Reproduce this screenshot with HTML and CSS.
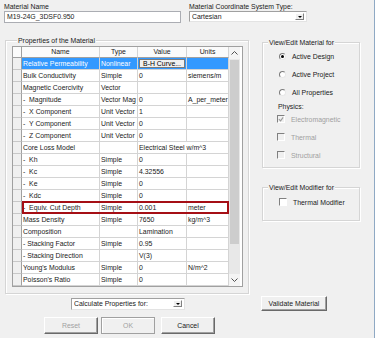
FILE: index.html
```html
<!DOCTYPE html>
<html lang="en">

<head>
    <meta charset="UTF-8">
    <meta name="viewport" content="width=device-width, initial-scale=1.0">
    <title>Material Properties</title>
    <link rel="stylesheet" href="styles.css">
</head>

<body>
    <div class="dialog">
        <div class="top">
            <div class="field name-field">
                <div class="label">Material Name</div>
                <div class="textbox">M19-24G_3DSF0.950</div>
            </div>
            <div class="field coord-field">
                <div class="label">Material Coordinate System Type:</div>
                <div class="combo coord-combo"><span class="combo-text">Cartesian</span><span class="drop"></span></div>
            </div>
        </div>

        <div class="main">
            <div class="group props">
                <div class="group-title">Properties of the Material</div>
                <div class="grid-wrap">
                    <div class="grid">
                        <div class="row head">
                            <div class="c rh"></div>
                            <div class="c">Name</div>
                            <div class="c">Type</div>
                            <div class="c">Value</div>
                            <div class="c">Units</div>
                        </div>
                        <div class="row sel">
                            <div class="c rh"></div>
                            <div class="c">Relative Permeability</div>
                            <div class="c">Nonlinear</div>
                            <div class="c"><span class="cell-btn">B-H Curve...</span></div>
                            <div class="c"></div>
                        </div>
                        <div class="row">
                            <div class="c rh"></div>
                            <div class="c">Bulk Conductivity</div>
                            <div class="c">Simple</div>
                            <div class="c">0</div>
                            <div class="c">siemens/m</div>
                        </div>
                        <div class="row">
                            <div class="c rh"></div>
                            <div class="c">Magnetic Coercivity</div>
                            <div class="c">Vector</div>
                            <div class="c"></div>
                            <div class="c"></div>
                        </div>
                        <div class="row">
                            <div class="c rh"></div>
                            <div class="c">-&nbsp; Magnitude</div>
                            <div class="c">Vector Mag</div>
                            <div class="c">0</div>
                            <div class="c">A_per_meter</div>
                        </div>
                        <div class="row">
                            <div class="c rh"></div>
                            <div class="c">-&nbsp; X Component</div>
                            <div class="c">Unit Vector</div>
                            <div class="c">1</div>
                            <div class="c"></div>
                        </div>
                        <div class="row">
                            <div class="c rh"></div>
                            <div class="c">-&nbsp; Y Component</div>
                            <div class="c">Unit Vector</div>
                            <div class="c">0</div>
                            <div class="c"></div>
                        </div>
                        <div class="row">
                            <div class="c rh"></div>
                            <div class="c">-&nbsp; Z Component</div>
                            <div class="c">Unit Vector</div>
                            <div class="c">0</div>
                            <div class="c"></div>
                        </div>
                        <div class="row">
                            <div class="c rh"></div>
                            <div class="c">Core Loss Model</div>
                            <div class="c"></div>
                            <div class="c span2">Electrical Steel w/m^3</div>
                        </div>
                        <div class="row">
                            <div class="c rh"></div>
                            <div class="c">-&nbsp; Kh</div>
                            <div class="c">Simple</div>
                            <div class="c">0</div>
                            <div class="c"></div>
                        </div>
                        <div class="row">
                            <div class="c rh"></div>
                            <div class="c">-&nbsp; Kc</div>
                            <div class="c">Simple</div>
                            <div class="c">4.32556</div>
                            <div class="c"></div>
                        </div>
                        <div class="row">
                            <div class="c rh"></div>
                            <div class="c">-&nbsp; Ke</div>
                            <div class="c">Simple</div>
                            <div class="c">0</div>
                            <div class="c"></div>
                        </div>
                        <div class="row">
                            <div class="c rh"></div>
                            <div class="c">-&nbsp; Kdc</div>
                            <div class="c">Simple</div>
                            <div class="c">0</div>
                            <div class="c"></div>
                        </div>
                        <div class="row mark">
                            <div class="c rh"></div>
                            <div class="c">-&nbsp; Equiv. Cut Depth</div>
                            <div class="c">Simple</div>
                            <div class="c">0.001</div>
                            <div class="c">meter</div>
                        </div>
                        <div class="row">
                            <div class="c rh"></div>
                            <div class="c">Mass Density</div>
                            <div class="c">Simple</div>
                            <div class="c">7650</div>
                            <div class="c">kg/m^3</div>
                        </div>
                        <div class="row">
                            <div class="c rh"></div>
                            <div class="c">Composition</div>
                            <div class="c"></div>
                            <div class="c">Lamination</div>
                            <div class="c"></div>
                        </div>
                        <div class="row">
                            <div class="c rh"></div>
                            <div class="c">- Stacking Factor</div>
                            <div class="c">Simple</div>
                            <div class="c">0.95</div>
                            <div class="c"></div>
                        </div>
                        <div class="row">
                            <div class="c rh"></div>
                            <div class="c">- Stacking Direction</div>
                            <div class="c"></div>
                            <div class="c">V(3)</div>
                            <div class="c"></div>
                        </div>
                        <div class="row">
                            <div class="c rh"></div>
                            <div class="c">Young's Modulus</div>
                            <div class="c">Simple</div>
                            <div class="c">0</div>
                            <div class="c">N/m^2</div>
                        </div>
                        <div class="row">
                            <div class="c rh"></div>
                            <div class="c">Poisson's Ratio</div>
                            <div class="c">Simple</div>
                            <div class="c">0</div>
                            <div class="c"></div>
                        </div>
                    </div>
                    <div class="scrollbar">
                        <div class="sb-arrow">
                            <svg width="7" height="4" viewBox="0 0 7 4"><path d="M0.5 3.5 L3.5 0.5 L6.5 3.5" fill="none" stroke="#505050" stroke-width="1"/></svg>
                        </div>
                        <div class="sb-track"><div class="sb-thumb"></div></div>
                        <div class="sb-arrow">
                            <svg width="7" height="4" viewBox="0 0 7 4"><path d="M0.5 0.5 L3.5 3.5 L6.5 0.5" fill="none" stroke="#505050" stroke-width="1"/></svg>
                        </div>
                    </div>
                </div>
            </div>

            <div class="side">
                <div class="group view">
                    <div class="group-title">View/Edit Material for</div>
                    <div class="opt first"><span class="radio on"></span>Active Design</div>
                    <div class="opt"><span class="radio"></span>Active Project</div>
                    <div class="opt"><span class="radio"></span>All Properties</div>
                    <div class="physics">Physics:</div>
                    <div class="chk-row off em"><span class="check checked"><svg width="7" height="7" viewBox="0 0 7 7"><path d="M1 3 L3 5 L6 1" fill="none" stroke="#9a9a9a" stroke-width="1.3"/></svg></span>Electromagnetic</div>
                    <div class="chk-row off"><span class="check"></span>Thermal</div>
                    <div class="chk-row off"><span class="check"></span>Structural</div>
                </div>
                <div class="group modifier">
                    <div class="group-title">View/Edit Modifier for</div>
                    <div class="chk-row mod"><span class="check live"></span>Thermal Modifier</div>
                </div>
            </div>
        </div>

        <div class="calc-row">
            <div class="combo calc-combo"><span class="combo-text">Calculate Properties for:</span><span class="drop"></span></div>
            <div class="btn validate">Validate Material</div>
        </div>
        <div class="btn-row">
            <div class="btn off reset">Reset</div>
            <div class="btn off ok">OK</div>
            <div class="btn cancel">Cancel</div>
        </div>
    </div>
</body>

</html>
```

FILE: styles.css
```css
body {
    margin: 0;
    background-color: #ffffff;
    font-family: "Liberation Sans", Arial, sans-serif;
    font-size: 6.9px;
    color: #1a1a1a;
}

.dialog {
    width: 375px;
    height: 338px;
    box-sizing: border-box;
    background-color: #f0f0f0;
    border-right: 1px solid #8fa9c4;
    overflow: hidden;
}

/* top fields */
.top {
    display: flex;
    padding-top: 2px;
}

.label {
    line-height: 9px;
    height: 9px;
    white-space: nowrap;
}

.name-field {
    margin-left: 4px;
    width: 177px;
}

.coord-field {
    margin-left: 8px;
}

.textbox {
    height: 12px;
    box-sizing: border-box;
    background-color: #ffffff;
    border: 1px solid #abadb3;
    line-height: 10px;
    padding-left: 2px;
}

.combo {
    display: flex;
    align-items: center;
    box-sizing: border-box;
    background-color: #ffffff;
    border: 1px solid;
    border-color: #a0a0a0 #e3e3e3 #e3e3e3 #a0a0a0;
    padding-left: 2px;
}

.coord-combo {
    width: 118px;
    height: 11px;
}

.combo-text {
    flex: 1;
    white-space: nowrap;
    overflow: hidden;
}

.drop {
    width: 9px;
    height: 7px;
    margin-right: 2px;
    box-sizing: border-box;
    background-color: #f0f0f0;
    border: 1px solid;
    border-color: #ffffff #808080 #808080 #ffffff;
    display: flex;
    align-items: center;
    justify-content: center;
}

.drop::after {
    content: "";
    border-left: 2px solid transparent;
    border-right: 2px solid transparent;
    border-top: 2px solid #000000;
}

/* group boxes */
.main {
    display: flex;
    align-items: flex-start;
    margin-top: 17px;
}

.group {
    box-sizing: border-box;
    border: 1px solid #d5d5d5;
    box-shadow: 1px 1px 0 #ffffff, inset 1px 1px 0 #ffffff;
}

.group-title {
    width: max-content;
    margin: -5px 0 0 5px;
    padding: 0 1px;
    line-height: 9px;
    background-color: #f0f0f0;
}

.props {
    margin-left: 5px;
    width: 244px;
    height: 254px;
    padding-left: 6px;
}

.grid-wrap {
    display: flex;
    width: 229px;
    margin-top: 1px;
    border: 1px solid #a0a0a0;
    background-color: #ffffff;
}

.grid {
    width: 216px;
}

.row {
    display: grid;
    grid-template-columns: 9px 78px 38px 49px 42px;
    height: 12px;
}

.c {
    box-sizing: border-box;
    height: 12px;
    border-right: 1px solid #d4d4d4;
    border-bottom: 1px solid #d4d4d4;
    padding-left: 1px;
    line-height: 11px;
    white-space: nowrap;
    overflow: hidden;
}

.c.span2 {
    grid-column: span 2;
}

.c.rh {
    background-color: #f0f0f0;
    border-right-color: #a0a0a0;
    border-bottom-color: #c8c8c8;
}

.row.head {
    height: 11px;
}

.row.head .c {
    height: 11px;
    line-height: 10px;
    text-align: center;
    padding-left: 0;
    border-bottom-color: #a0a0a0;
    background-color: #fbfbfb;
}

.row.sel .c:not(.rh) {
    background-color: #3399ff;
    color: #ffffff;
}

.cell-btn {
    display: block;
    margin: 1px 1px 0 0;
    height: 9px;
    line-height: 8px;
    box-sizing: border-box;
    background-color: #f0f0f0;
    color: #000000;
    border: 1px solid #7a7a7a;
    text-align: center;
}

.row.mark {
    position: relative;
}

.row.mark::after {
    content: "";
    position: absolute;
    left: 9px;
    right: 0;
    top: -1px;
    bottom: 0;
    border: 2px solid #a50f15;
}

/* scrollbar */
.scrollbar {
    width: 11px;
    display: flex;
    flex-direction: column;
    background-color: #e8e8e8;
}

.sb-arrow {
    height: 12px;
    display: flex;
    align-items: center;
    justify-content: center;
    background-color: #f4f4f4;
}

.sb-track {
    flex: 1;
}

.sb-thumb {
    height: 184px;
    margin: 1px 1px 0 1px;
    background-color: #cdcdcd;
}

/* right side */
.side {
    margin-left: 13px;
    width: 98px;
}

.view {
    margin-top: 2px;
    height: 126px;
}

.opt {
    display: flex;
    align-items: center;
    height: 12px;
    margin-top: 6px;
    padding-left: 16px;
}

.opt.first {
    margin-top: 3px;
}

.radio {
    width: 7px;
    height: 7px;
    box-sizing: border-box;
    border-radius: 50%;
    border: 1px solid;
    border-color: #7a7a7a #e8e8e8 #e8e8e8 #7a7a7a;
    background-color: #ffffff;
    margin-right: 6px;
    display: flex;
    align-items: center;
    justify-content: center;
}

.radio.on::after {
    content: "";
    width: 3px;
    height: 3px;
    border-radius: 50%;
    background-color: #000000;
}

.physics {
    height: 12px;
    line-height: 12px;
    margin-top: 3px;
    padding-left: 15px;
}

.chk-row {
    display: flex;
    align-items: center;
    height: 12px;
    margin-top: 6px;
    padding-left: 14px;
}

.chk-row.em {
    margin-top: 0;
}

.chk-row.off {
    color: #a0a0a0;
}

.check {
    width: 8px;
    height: 8px;
    box-sizing: border-box;
    border: 1px solid;
    border-color: #808080 #ffffff #ffffff #808080;
    background-color: #f0f0f0;
    margin-right: 6px;
    display: flex;
    align-items: center;
    justify-content: center;
}

.check.live {
    background-color: #ffffff;
}

.modifier {
    margin-top: 19px;
    height: 34px;
}

.chk-row.mod {
    margin-top: 4px;
    padding-left: 16px;
}

/* bottom buttons */
.calc-row {
    display: flex;
    align-items: center;
    height: 15px;
    margin-top: 2px;
}

.calc-combo {
    margin-left: 71px;
    width: 114px;
    height: 12px;
}

.btn {
    box-sizing: border-box;
    display: flex;
    align-items: center;
    justify-content: center;
    background-color: #f0f0f0;
    border: 1px solid;
    border-color: #ffffff #696969 #696969 #ffffff;
    box-shadow: inset -1px -1px 0 #a0a0a0;
    white-space: nowrap;
}

.btn.off {
    color: #a0a0a0;
}

.validate {
    margin-left: 76px;
    width: 66px;
    height: 15px;
}

.btn-row {
    display: flex;
    margin-top: 6px;
}

.btn-row .btn {
    height: 17px;
    width: 54px;
}

.reset {
    margin-left: 44px;
}

.ok {
    margin-left: 3px;
    border-color: #a0a0a0;
    box-shadow: inset 1px 1px 0 #ffffff;
}

.cancel {
    margin-left: 6px;
}
```
